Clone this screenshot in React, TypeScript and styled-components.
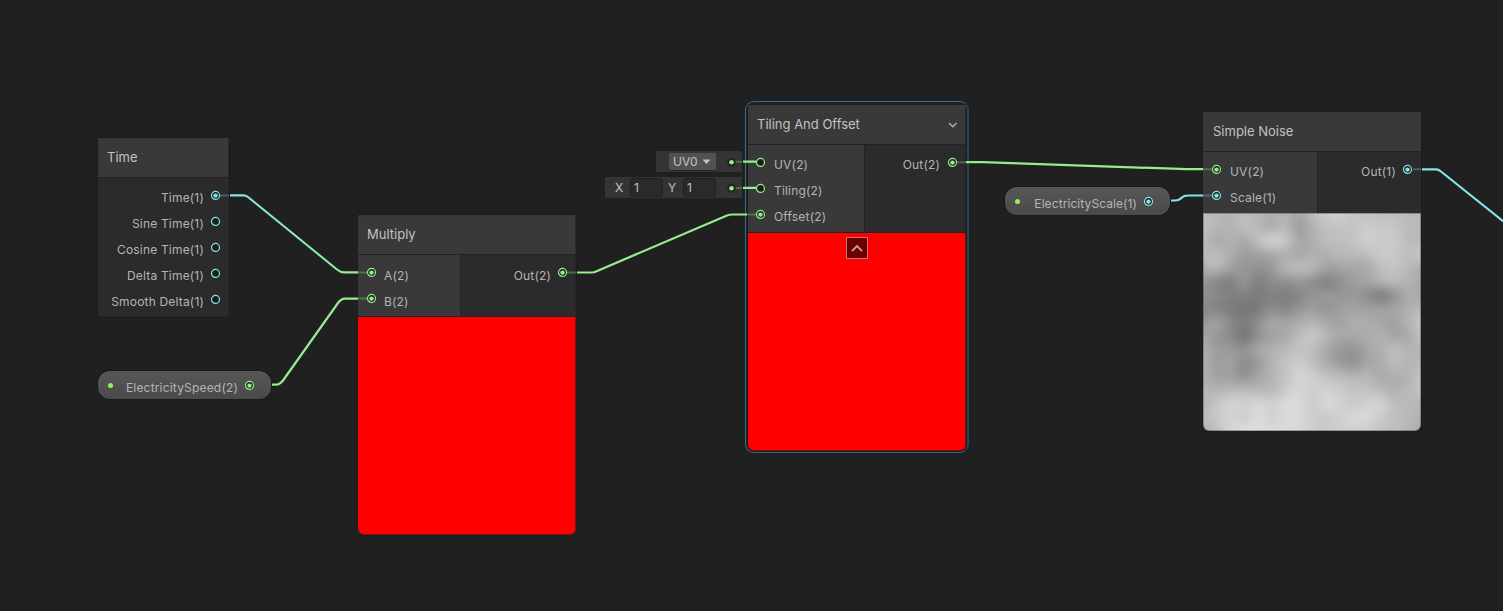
import React, { useLayoutEffect, useRef } from "react";
import styled, { createGlobalStyle } from "styled-components";

const GREEN = "#94ee8e";
const CYAN = "#84e4e7";

const GlobalStyle = createGlobalStyle`
  * { box-sizing: border-box; }
  body { margin: 0; background: #202020; overflow: hidden; }
`;

const Graph = styled.main`
  position: relative;
  width: 1503px;
  height: 611px;
  overflow: hidden;
  background: #202020;
  border-bottom: 1px solid #1b1b1b;
  font-family: Inter, "Liberation Sans", sans-serif;
  font-size: 12px;
  color: #b4b4b4;
`;

const Placed = styled.div<{ $x: number; $y: number }>`
  position: absolute;
  left: ${(p) => p.$x}px;
  top: ${(p) => p.$y}px;
`;

const NodeFrame = styled(Placed)<{ $w: number; $round?: boolean; $edge?: boolean }>`
  width: ${(p) => p.$w}px;
  display: flex;
  flex-direction: column;
  background: #232323;
  overflow: hidden;
  border-radius: ${(p) => (p.$round ? "1px 1px 6px 6px" : "1px")};
  box-shadow: 0 0 2px rgba(12, 12, 12, 0.45);

  &::after {
    content: "";
    position: absolute;
    inset: 0;
    border: 0 solid rgba(36, 36, 36, 0.6);
    border-width: ${(p) => (p.$edge ? "0 1px 1px 0" : "0")};
    border-radius: inherit;
  }
`;

const Selection = styled(Placed)`
  width: 224px;
  height: 352px;
  border: 1px solid #32708f;
  border-right: 2px solid #284552;
  border-radius: 9px;
`;

const Header = styled.header<{ $pad?: number }>`
  height: 39px;
  padding: 0 8px 2px ${(p) => p.$pad ?? 9}px;
  display: flex;
  align-items: center;
  justify-content: space-between;
  background: #393939;
  color: #c2c2c2;
  font-size: 13px;
  line-height: 16px;
`;

const Body = styled.div<{ $h: number }>`
  height: ${(p) => p.$h}px;
  margin-top: 1px;
  display: flex;
  gap: 1px;
`;

const Inputs = styled.div<{ $w: number; $pad?: number }>`
  width: ${(p) => p.$w}px;
  padding: 4px 0 0 ${(p) => p.$pad ?? 8}px;
  background: #393939;
`;

const Outputs = styled.div`
  flex: 1;
  padding: 4px 8px 0 0;
  background: #2b2b2b;
`;

const PortRow = styled.div<{ $out?: boolean; $gap?: number }>`
  height: 26px;
  display: flex;
  flex-direction: ${(p) => (p.$out ? "row-reverse" : "row")};
  align-items: center;
  gap: ${(p) => p.$gap ?? (p.$out ? 6 : 8)}px;
`;

const PortLabel = styled.span<{ $low?: boolean; $spacing?: number }>`
  padding-top: ${(p) => (p.$low ? 7 : 5)}px;
  line-height: 15px;
  letter-spacing: ${(p) => p.$spacing ?? 0.18}px;
  white-space: nowrap;
`;

const PortIcon = styled.svg`
  flex: none;
  width: 11px;
  height: 12px;
`;

const Preview = styled.div`
  height: 218px;
  margin-top: 1px;
  background: #ff0000;
  border-radius: 0 0 6px 6px;
  display: flex;
  justify-content: center;
  align-items: flex-start;
`;

const Collapse = styled.div`
  width: 22px;
  height: 22px;
  margin: 4px 1px 0 0;
  display: flex;
  align-items: center;
  justify-content: center;
  background: #6b0000;
  border: 1px solid #c47676;
`;

const NoiseFrame = styled.div`
  position: relative;
  height: 218px;

  &::after {
    content: "";
    position: absolute;
    inset: 0;
    border: 1px solid rgba(50, 50, 50, 0.35);
    border-radius: 0 0 6px 6px;
  }
`;

const NoiseCanvas = styled.canvas`
  display: block;
  width: 218px;
  height: 218px;
  border-radius: 0 0 6px 6px;
`;

const Pill = styled(Placed)<{ $w: number }>`
  width: ${(p) => p.$w}px;
  height: 28px;
  padding: 0 16px 0 10px;
  display: flex;
  align-items: center;
  justify-content: space-between;
  border-radius: 12px;
  background: linear-gradient(#575757, #4a4a4a);
  box-shadow: 0 0 1px 1px #1a1a1a;
`;

const PillDot = styled.i`
  width: 5px;
  height: 5px;
  border-radius: 50%;
  background: #96ee61;
`;

const PillEnd = styled.div`
  display: flex;
  align-items: center;
  gap: 6px;
`;

const InlineInput = styled(Placed)<{ $w: number }>`
  width: ${(p) => p.$w}px;
  height: 21px;
  padding-right: 5px;
  display: flex;
  align-items: center;
  justify-content: flex-end;
  background: #343434;
  color: #c4c4c4;
`;

const Select = styled.div`
  width: 47px;
  height: 17px;
  margin: 0 10px 0 0;
  padding: 0 5px 0 4px;
  display: flex;
  align-items: center;
  justify-content: space-between;
  border-radius: 2px;
  background: #515151;
  box-shadow: 0 1px 0 #282828;
`;

const Axis = styled.span`
  width: 20px;
  padding-left: 5px;
`;

const Field = styled.div`
  width: 33px;
  height: 19px;
  padding-left: 3px;
  display: flex;
  align-items: center;
  border: 1px solid #202020;
  border-radius: 3px;
  background: #2a2a2a;
`;

const Gap = styled.span<{ $w: number }>`
  width: ${(p) => p.$w}px;
`;

const WireLayer = styled.svg`
  position: absolute;
  inset: 0;
  pointer-events: none;
`;

function Port({ color = GREEN, linked = false }: { color?: string; linked?: boolean }) {
  return (
    <PortIcon viewBox="0 0 11 12">
      <circle cx="5.5" cy="6.4" r="4" fill="#1b1f1b" stroke={color} strokeWidth="1.2" />
      {linked && <circle cx="5.5" cy="6.6" r="2.2" fill={color} />}
    </PortIcon>
  );
}

function InlinePort() {
  return (
    <PortIcon viewBox="0 0 11 12">
      <circle cx="5.5" cy="6.2" r="4.3" fill="#212121" />
      <circle cx="5.5" cy="6.2" r="2.3" fill={GREEN} />
    </PortIcon>
  );
}

type PortSpec = { label: string; color?: string; linked?: boolean };
type PortsProps = { items: PortSpec[]; out?: boolean; low?: boolean; gap?: number };

function Ports({ items, out, low, gap }: PortsProps) {
  return (
    <>
      {items.map((p) => (
        <PortRow key={p.label} $out={out} $gap={gap}>
          <Port color={p.color} linked={p.linked} />
          <PortLabel $low={low}>{p.label}</PortLabel>
        </PortRow>
      ))}
    </>
  );
}

const NOISE = [
  [190,185,180,190,185,175,180,165,190,205,210,195,195,190,190,185,185],
  [195,180,178,192,185,165,190,150,178,192,195,195,205,200,200,185,185],
  [185,165,180,165,195,220,205,165,175,190,190,195,210,200,205,185,185],
  [190,190,175,155,160,165,172,165,175,175,185,185,190,205,200,190,205],
  [175,190,160,150,145,150,188,192,190,160,165,165,165,190,198,185,170],
  [150,130,122,158,120,145,140,152,140,122,140,160,165,185,190,180,170],
  [145,138,130,128,124,128,125,130,150,155,150,150,140,112,140,175,165],
  [135,128,122,118,118,142,128,150,158,145,160,165,160,165,165,175,185],
  [150,168,135,126,145,172,165,175,182,170,160,175,175,165,160,180,200],
  [165,150,138,108,145,160,165,190,204,184,170,170,170,182,160,165,195],
  [175,155,155,150,170,178,187,197,190,165,150,145,165,175,195,180,180],
  [180,155,165,135,152,180,195,205,190,172,155,140,165,170,190,180,185],
  [175,158,160,142,165,182,192,218,207,195,190,185,185,168,175,175,200],
  [185,180,185,190,185,180,203,214,205,212,205,195,195,185,175,185,195],
  [180,200,215,210,218,210,220,220,200,220,210,200,212,218,190,185,180],
  [190,200,212,200,222,204,218,217,205,200,208,218,217,200,190,185,180],
  [175,190,215,224,222,218,222,215,205,200,205,205,205,195,190,185,165],
];

const sample = (row: number, col: number) =>
  NOISE[Math.min(16, Math.max(0, row))][Math.min(16, Math.max(0, col))];

// Weights of the four neighbours in a lightly sharpened cubic B-spline.
const weights = (t: number) => {
  const sharp = [
    0.5 * (-t + 2 * t * t - t * t * t),
    0.5 * (2 - 5 * t * t + 3 * t * t * t),
    0.5 * (t + 4 * t * t - 3 * t * t * t),
    0.5 * (-t * t + t * t * t),
  ];
  const soft = [
    (1 - t) ** 3 / 6,
    (3 * t ** 3 - 6 * t * t + 4) / 6,
    (-3 * t ** 3 + 3 * t * t + 3 * t + 1) / 6,
    t ** 3 / 6,
  ];
  return sharp.map((s, i) => s * 0.2 + soft[i] * 0.8);
};

function NoisePreview() {
  const ref = useRef<HTMLCanvasElement>(null);
  useLayoutEffect(() => {
    const ctx = ref.current?.getContext("2d");
    if (!ctx) return;
    const size = 218;
    const image = ctx.createImageData(size, size);
    for (let y = 0; y < size; y++) {
      for (let x = 0; x < size; x++) {
        const gx = (x / size) * 16;
        const gy = (y / size) * 16;
        const ix = Math.floor(gx);
        const iy = Math.floor(gy);
        const wx = weights(gx - ix);
        const wy = weights(gy - iy);
        let v = 0;
        for (let j = 0; j < 4; j++)
          for (let i = 0; i < 4; i++) v += wy[j] * wx[i] * sample(iy + j - 1, ix + i - 1);
        const o = (y * size + x) * 4;
        image.data[o] = image.data[o + 1] = image.data[o + 2] = v;
        image.data[o + 3] = 255;
      }
    }
    ctx.putImageData(image, 0, 0);
  }, []);
  return (
    <NoiseFrame>
      <NoiseCanvas ref={ref} width={218} height={218} />
    </NoiseFrame>
  );
}

function Wires() {
  return (
    <WireLayer width="1503" height="611" viewBox="0 0 1503 611" fill="none">
      <defs>
        <linearGradient id="cyanToGreen" gradientUnits="userSpaceOnUse" x1="230" y1="0" x2="358" y2="0">
          <stop offset="0" stopColor={CYAN} />
          <stop offset="1" stopColor={GREEN} />
        </linearGradient>
      </defs>
      <g strokeWidth="2.2" strokeLinejoin="round">
        <path d="M230 195.3H243Q246 195.3 248 197L337 269.5Q340.5 272.4 344 272.4H358" stroke="url(#cyanToGreen)" />
        <path d="M272 384.6H276Q280 384.6 283 380.5L338 303Q341 298.6 345 298.6H358" stroke={GREEN} />
        <path d="M577 272.5H592Q594 272.5 596 271.5L727 215.5Q730 214.5 732 214.5H747" stroke={GREEN} />
        <path d="M966 162.2H983L1187 169.2H1203" stroke={GREEN} />
        <path d="M1171 200.5H1175Q1179 200.5 1182 197.5Q1184 195.5 1188 195.5H1203" stroke={CYAN} />
        <path d="M1422 169.3H1436Q1438.5 169.3 1441 171.5L1504 222" stroke={CYAN} />
        <path d="M743 161.7H756M743 187.9H756" stroke={GREEN} />
      </g>
      <g strokeWidth="2" strokeOpacity="0.3">
        <path d="M220 195.5H229M1413 169.3H1421M1203 195.5H1212" stroke={CYAN} />
        <path d="M358 272.4H367M358 298.6H367M567 272.5H576M747 214.5H756M957 162.2H966M1203 169.2H1212M735.5 161.7H742M735.5 187.9H742" stroke={GREEN} />
      </g>
    </WireLayer>
  );
}

export default function App() {
  return (
    <>
      <GlobalStyle />
      <Graph>
        <NodeFrame $x={98} $y={138} $w={131} $edge>
          <Header>Time</Header>
          <Body $h={139}>
            <Outputs>
              <Ports
                out
                items={[
                  { label: "Time(1)", color: CYAN, linked: true },
                  { label: "Sine Time(1)", color: CYAN },
                  { label: "Cosine Time(1)", color: CYAN },
                  { label: "Delta Time(1)", color: CYAN },
                  { label: "Smooth Delta(1)", color: CYAN },
                ]}
              />
            </Outputs>
          </Body>
        </NodeFrame>

        <NodeFrame $x={358} $y={215} $w={218} $round $edge>
          <Header>Multiply</Header>
          <Body $h={61}>
            <Inputs $w={102}>
              <Ports low gap={7} items={[{ label: "A(2)", linked: true }, { label: "B(2)", linked: true }]} />
            </Inputs>
            <Outputs>
              <Ports out low items={[{ label: "Out(2)", linked: true }]} />
            </Outputs>
          </Body>
          <Preview />
        </NodeFrame>

        <Selection $x={745} $y={101} />
        <NodeFrame $x={748} $y={105} $w={218} $round $edge>
          <Header>
            Tiling And Offset
            <svg width="10" height="8" viewBox="0 0 10 8" fill="none">
              <path d="M1 3L4.800 6.700L8.500 3" stroke="#b0b0b0" strokeWidth="1.400" />
            </svg>
          </Header>
          <Body $h={87}>
            <Inputs $w={116} $pad={7}>
              <Ports items={[{ label: "UV(2)" }, { label: "Tiling(2)" }, { label: "Offset(2)", linked: true }]} />
            </Inputs>
            <Outputs>
              <Ports out gap={7} items={[{ label: "Out(2)", linked: true }]} />
            </Outputs>
          </Body>
          <Preview>
            <Collapse>
              <svg width="14" height="12" viewBox="0 0 14 12" fill="none">
                <path d="M2 9L7 4L12 9" stroke="#c59a9a" strokeWidth="1.900" />
              </svg>
            </Collapse>
          </Preview>
        </NodeFrame>

        <NodeFrame $x={1203} $y={112} $w={218} $round>
          <Header $pad={10}>Simple Noise</Header>
          <Body $h={61}>
            <Inputs $w={114}>
              <Ports items={[{ label: "UV(2)", linked: true }, { label: "Scale(1)", color: CYAN, linked: true }]} />
            </Inputs>
            <Outputs>
              <Ports out items={[{ label: "Out(1)", color: CYAN, linked: true }]} />
            </Outputs>
          </Body>
          <NoisePreview />
        </NodeFrame>

        <Pill $x={98} $y={371} $w={173}>
          <PillDot />
          <PillEnd>
            <PortLabel>ElectricitySpeed(2)</PortLabel>
            <Port linked />
          </PillEnd>
        </Pill>
        <Pill $x={1005} $y={187} $w={165}>
          <PillDot />
          <PillEnd>
            <PortLabel $spacing={0.08}>ElectricityScale(1)</PortLabel>
            <Port color={CYAN} linked />
          </PillEnd>
        </Pill>

        <InlineInput $x={656} $y={151} $w={86}>
          <Select>
            UV0
            <svg width="9" height="6" viewBox="0 0 9 6">
              <path d="M0.5 0.5H8.5L4.5 5Z" fill="#c4c4c4" />
            </svg>
          </Select>
          <InlinePort />
        </InlineInput>
        <InlineInput $x={605} $y={177} $w={137}>
          <Axis>X</Axis>
          <Field>1</Field>
          <Axis>Y</Axis>
          <Field>1</Field>
          <Gap $w={10} />
          <InlinePort />
        </InlineInput>
        <Wires />
      </Graph>
    </>
  );
}
